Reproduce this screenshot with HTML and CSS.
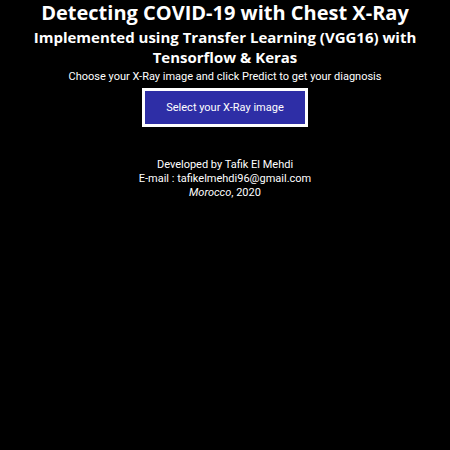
FILE: index.html
```html
<!DOCTYPE html>
<html>
<head>
<meta charset="utf-8">
<link rel="stylesheet" href="styles.css">
</head>
<body>
<main class="page">
  <h1 class="title">Detecting COVID-19 with Chest X-Ray</h1>
  <h2 class="subtitle">Implemented using Transfer Learning (VGG16) with<br>Tensorflow &amp; Keras</h2>
  <p class="hint">Choose your X-Ray image and click Predict to get your diagnosis</p>
  <button class="select-btn">Select your X-Ray image</button>
  <footer class="credits">
    <div>Developed by Tafik El Mehdi</div>
    <div>E-mail : tafikelmehdi96@gmail.com</div>
    <div><em>Morocco</em>, 2020</div>
  </footer>
</main>
</body>
</html>
```
FILE: styles.css
```css
html, body {
  margin: 0;
  padding: 0;
  background: #000;
  color: #fff;
  height: 100%;
}
.page {
  display: flex;
  flex-direction: column;
  align-items: center;
  text-align: center;
  font-family: Roboto, "Open Sans", sans-serif;
}
.title {
  margin: 0;
  font-family: "Open Sans", sans-serif;
  font-size: 20px;
  line-height: 26px;
  font-weight: bold;
  white-space: nowrap;
}
.subtitle {
  margin: 1px 0 0;
  font-family: "Open Sans", sans-serif;
  font-size: 15px;
  line-height: 20px;
  font-weight: bold;
  white-space: nowrap;
}
.hint {
  margin: 2px 0 0;
  font-size: 11px;
  line-height: 15px;
  white-space: nowrap;
}
.select-btn {
  margin-top: 4px;
  width: 166px;
  height: 39px;
  padding: 0;
  background: #2e2ea6;
  border: 3px solid #fff;
  color: #fff;
  font-family: Roboto, sans-serif;
  font-size: 11px;
}
.credits {
  margin-top: 31px;
  font-size: 11px;
  line-height: 14px;
}
```
